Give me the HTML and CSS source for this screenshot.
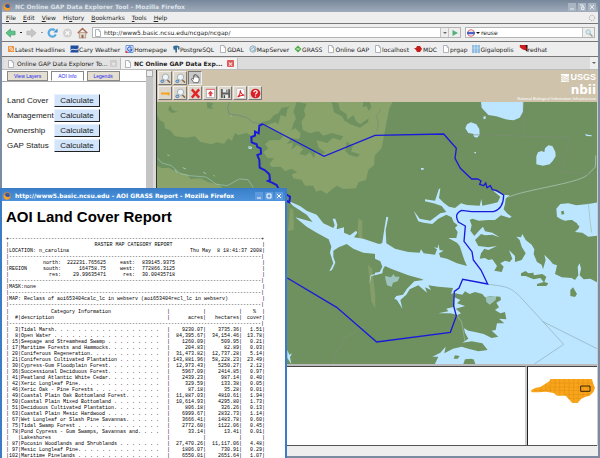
FILE: index.html
```html
<!DOCTYPE html>
<html lang="en">
  <head>
    <meta charset="UTF-8" />
    <meta name="viewport" content="width=device-width, initial-scale=1.0" />
    <title>NC Online GAP Data Explorer Tool</title>
    <link rel="stylesheet" href="styles.css">
  </head>
  <body>
    <!-- Shared icons -->
    <svg class="defs" aria-hidden="true">
      <symbol id="page" viewBox="0 0 8 8">
        <path d="M1.5 .5h3.500l1.500 2v5h-5z" fill="#fff" stroke="#9aa3ac" stroke-width=".8" />
        <path d="M5 .5v2h1.500" fill="none" stroke="#9aa3ac" stroke-width=".6" />
      </symbol>
      <symbol id="fox" viewBox="0 0 8 8">
        <circle cx="4" cy="4" r="3.700" fill="#e8822a" />
        <circle cx="4.400" cy="3.300" r="2.300" fill="#2a5db0" />
        <path d="M.6 3c1 1 2 .6 2.600 1.400s1.800 1 3.800.4c-.6 2-2 2.900-3.400 2.700S.4 5.500.6 3z" fill="#f6a531" />
      </symbol>
      <symbol id="lens" viewBox="0 0 12 12">
        <path d="M7.500 7l3.500 3.500" stroke="#8a6a50" stroke-width="1.600" />
        <circle cx="6" cy="4.500" r="3.400" fill="#eef5fb" stroke="#9fa8b0" />
        <circle cx="2.600" cy="9" r="2" fill="#4f7fb5" />
        <path d="M1.500 9h2.200" stroke="#fff" stroke-width=".8" />
      </symbol>
    </svg>

    <div class="browser">
      <header class="titlebar">
        <svg class="icon"><use href="#fox" /></svg>
        <span class="title">NC Online GAP Data Explorer Tool - Mozilla Firefox</span>
        <button class="win" aria-label="Minimize"><svg viewBox="0 0 8 8"><path d="M2 6h4" /></svg></button>
        <button class="win" aria-label="Restore"><svg viewBox="0 0 8 8"><path d="M2 2h3v2M3.500 4h2.500v2.500h-2.500z" /></svg></button>
        <button class="win" aria-label="Close"><svg viewBox="0 0 8 8"><path d="M2 2l4 4M6 2l-4 4" /></svg></button>
      </header>

      <nav class="menubar">
        <a href="#"><u>F</u>ile</a>
        <a href="#"><u>E</u>dit</a>
        <a href="#"><u>V</u>iew</a>
        <a href="#">Hi<u>s</u>tory</a>
        <a href="#"><u>B</u>ookmarks</a>
        <a href="#"><u>T</u>ools</a>
        <a href="#"><u>H</u>elp</a>
        <svg class="throbber" viewBox="0 0 8 8"><circle cx="4" cy="4" r="2.700" /></svg>
      </nav>

      <div class="navbar">
        <button class="nav" aria-label="Back"><svg viewBox="0 0 12 12"><path d="M1 6l5-4.500v2.500h5v4h-5v2.500z" fill="#5cc389" stroke="#3c9a63" stroke-width=".7" /></svg></button>
        <i class="dot"></i>
        <button class="nav" aria-label="Forward"><svg viewBox="0 0 12 12"><path d="M11 6l-5-4.500v2.500h-5v4h5v2.500z" fill="#c6c6c6" stroke="#b0b0b0" stroke-width=".7" /></svg></button>
        <i class="dot off"></i>
        <button class="nav" aria-label="Reload"><svg viewBox="0 0 12 12"><path d="M9.500 7.500A4 4 0 1 1 8.500 3" fill="none" stroke="#57a9e0" stroke-width="2.400" /><path d="M7 5.500h4.500v-4.500z" fill="#3f92d0" /></svg></button>
        <button class="nav" aria-label="Stop"><svg viewBox="0 0 12 12"><circle cx="6" cy="6" r="5" fill="#d2d2d2" /><path d="M4 4l4 4M8 4l-4 4" stroke="#fff" stroke-width="1.400" /></svg></button>
        <button class="nav" aria-label="Home"><svg viewBox="0 0 12 12"><path d="M2.500 5.500h7v6h-7z" fill="#e2d5c5" stroke="#96715a" stroke-width=".6" /><path d="M.8 6.200l5.200-5.200 5.200 5.200" fill="none" stroke="#ab6d56" stroke-width="1.600" /><path d="M5 8h2v3.500h-2z" fill="#8a6650" /></svg></button>
        <div class="field url">
          <svg class="icon"><use href="#page" /></svg>
          <input type="text" aria-label="Address" value="http://www5.basic.ncsu.edu/ncgap/ncgap/">
          <button class="drop" aria-label="History"><i class="arrow"></i></button>
          <button class="go" aria-label="Go"><svg viewBox="0 0 8 8"><path d="M1.500 1l5.500 3-5.500 3z" fill="#55b077" /></svg></button>
        </div>
        <div class="field search">
          <svg class="icon" viewBox="0 0 8 8"><circle cx="4" cy="4" r="3.300" fill="#fff" stroke="#e0605a" /><path d="M0 2.800h8v2.500h-8z" fill="#4a62c8" /></svg>
          <i class="arrow dark"></i>
          <input type="text" aria-label="Search" value="reuse">
          <button class="go" aria-label="Search"><svg viewBox="0 0 8 8"><path d="M4.500 4.500l3 3" stroke="#999" stroke-width="1.300" /><circle cx="3.200" cy="3" r="2.200" fill="#d7e9f5" stroke="#9bb" stroke-width=".8" /></svg></button>
        </div>
      </div>

      <nav class="bookmarks">
        <a href="#"><svg class="icon" viewBox="0 0 8 8"><path d="M1 1h6v6h-6z" fill="#ef9444" /><path d="M2 3.500a2.500 2.500 0 0 1 2.500 2.500M2 2a4 4 0 0 1 4 4" fill="none" stroke="#fff" stroke-width=".7" /></svg>Latest Headlines</a>
        <a href="#"><svg class="icon wide" viewBox="0 0 8 8"><path d="M0 .5h8v7h-8z" fill="#1f4da0" /><path d="M0 5.500c3-3 5 1 8-2" fill="none" stroke="#fff" /></svg>Cary Weather</a>
        <a href="#"><svg class="icon wide" viewBox="0 0 8 8"><path d="M.5 .5h7v7h-7z" fill="#fff" stroke="#6d94d8" /><path d="M6 2.500a2.200 2.200 0 1 0 0 3v-1.300h-2" fill="none" stroke="#3862c8" stroke-width="1.200" /><path d="M0 6h2v2h-2z" fill="#d44" /></svg>Homepage</a>
        <a href="#"><svg class="icon" viewBox="0 0 8 8"><path d="M1 1.500q3-2 6.500 0v3h-1.500v-2h-1v5h-1.700v-3l-1.500.6z" fill="#386d98" /></svg>PostgreSQL</a>
        <a href="#"><svg class="icon"><use href="#page" /></svg>GDAL</a>
        <a href="#"><svg class="icon" viewBox="0 0 8 8"><circle cx="4" cy="4" r="3.200" fill="#dbe9ee" stroke="#7fa1b0" stroke-width=".8" /><path d="M1.500 5l3-3 2 3-3 1" fill="none" stroke="#6c93a8" stroke-width=".7" /></svg>MapServer</a>
        <a href="#"><svg class="icon" viewBox="0 0 8 8"><path d="M4 .5l3.500 3.500-3.500 3.500-3.500-3.500z" fill="#4da94d" /><path d="M2.500 4h3" stroke="#fff" /></svg>GRASS</a>
        <a href="#"><svg class="icon"><use href="#page" /></svg>Online GAP</a>
        <a href="#"><svg class="icon"><use href="#page" /></svg>localhost</a>
        <a href="#"><svg class="icon wide" viewBox="0 0 9 8"><path d="M0 3l2 0 1-2 3 0 2 3-2 3h-3l-1-2z" fill="#c51d1d" /></svg>MDC</a>
        <a href="#"><svg class="icon"><use href="#page" /></svg>prgap</a>
        <a href="#"><svg class="icon" viewBox="0 0 8 8"><path d="M0 0h8v8h-8z" fill="#90bce0" /><path d="M2.500 0v8M5.500 0v8M0 3h8" stroke="#c4dff0" stroke-width=".7" /></svg>Gigalopolis</a>
        <a href="#"><svg class="icon wide" viewBox="0 0 8 8"><path d="M0 0h8v7z" fill="#111" /><path d="M0 2q1-3 6-2l1.500 4.500q-3 1-5-.5z" fill="#d31c1c" /></svg>redhat</a>
      </nav>

      <div class="tabs">
        <div class="tab">
          <svg class="icon"><use href="#page" /></svg>
          <span>Online GAP Data Explorer To...</span>
          <button class="close" aria-label="Close tab">×</button>
        </div>
        <div class="tab current">
          <svg class="icon"><use href="#page" /></svg>
          <span>NC Online GAP Data Exp...</span>
          <button class="close" aria-label="Close tab">×</button>
        </div>
        <button class="list" aria-label="List tabs"><i class="arrow"></i></button>
      </div>

      <main class="content">
        <section class="side">
          <div class="panel">
            <nav class="panel-tabs">
              <a href="#">View Layers</a>
              <a href="#" class="on">AOI Info</a>
              <a href="#">Legends</a>
            </nav>
            <div class="calc">
              <label for="landcover">Land Cover</label><button id="landcover">Calculate</button>
              <label for="management">Management</label><button id="management">Calculate</button>
              <label for="ownership">Ownership</label><button id="ownership">Calculate</button>
              <label for="gapstatus">GAP Status</label><button id="gapstatus">Calculate</button>
            </div>
          </div>
          <div class="scroll"><i></i></div>
        </section>

        <section class="viewer">
          <div class="maptools">
            <div class="tools">
              <button aria-label="Zoom in"><svg viewBox="0 0 12 12"><use href="#lens" /></svg></button>
              <button aria-label="Zoom out"><svg viewBox="0 0 12 12"><use href="#lens" /></svg></button>
              <button class="pressed" aria-label="Pan"><svg viewBox="0 0 12 12"><path d="M4 10.500l-2.500-4 1-.6 1.300 1v-4h1.200v-1.200h1.200v.8h1.300v1h1.400v1.500h1v3l-1 2.500z" fill="#fff" stroke="#333" stroke-width=".7" /><path d="M5 5v-2M6.500 5v-2M8 5.300v-1.500" stroke="#333" stroke-width=".6" /></svg></button>
            </div>
            <div class="tools">
              <button aria-label="Draw area"><svg viewBox="0 0 12 12"><path d="M1 5h10l-1 3.500-2.500-1.500h-6.500z" fill="#f5a41d" /></svg></button>
              <button aria-label="Zoom to area"><svg viewBox="0 0 12 12"><use href="#lens" /></svg></button>
              <button aria-label="Delete"><svg viewBox="0 0 12 12"><path d="M2 1.500l8 9M10 1.500l-8 9" stroke="#e0252b" stroke-width="2.600" /></svg></button>
              <button aria-label="Upload"><svg viewBox="0 0 12 12"><path d="M1.500 1.500h9v9h-9z" fill="#fff" stroke="#a9b0b8" /><path d="M1 1.500h10" stroke="#e66" /><path d="M6 3l3 3.300h-1.800v2.700h-2.400v-2.700h-1.800z" fill="#e23c44" /></svg></button>
              <button aria-label="Save"><svg viewBox="0 0 12 12"><path d="M1 1h9l1 1v9h-10z" fill="#5d5d5d" /><path d="M3 1h6v4h-6zM3 7h6v4h-6z" fill="#e8e8e8" /><path d="M7 1.500h1v3h-1zM4 8h1.500v3h-1.500z" fill="#444" /></svg></button>
              <button aria-label="PDF"><svg viewBox="0 0 12 12"><path d="M2 .5h6l2.500 2.500v8.500h-8.500z" fill="#fff" stroke="#b8b8b8" stroke-width=".7" /><path d="M3 10c2-2 3-5 2.800-7.500.3 3 2.200 5 4.500 5.500-3-.4-5 .3-7.300 2z" fill="none" stroke="#d8232a" stroke-width="1.100" /></svg></button>
              <button aria-label="Help"><svg viewBox="0 0 12 12"><circle cx="6" cy="6" r="5.300" fill="#d81f26" /><path d="M4.200 4.700c0-2.500 3.700-2.300 3.600-.1 0 1.200-1.700 1.200-1.700 2.600M6 8.200v1.400" fill="none" stroke="#fff" stroke-width="1.300" /></svg></button>
            </div>
            <div class="logos">
              <div class="usgs"><svg viewBox="0 0 8 8"><path d="M0 0h8v8h-8z" fill="#fff" /><path d="M0 2.500c3-2 4 2.500 8 0M0 4.500c3-2 4 2.500 8 0M0 6.500c3-2 4 1.500 8 0" fill="none" stroke="#cfc3ab" stroke-width=".8" /></svg>USGS</div>
              <div class="nbii">nbii</div>
              <div class="tagline">National Biological Information Infrastructure</div>
            </div>
          </div>

          <svg class="map" viewBox="0 0 1320 786" preserveAspectRatio="xMinYMin slice" role="img" aria-label="Map of the area of interest">
            <!-- land -->
            <path d="M0 0h1340v800h-1340z" fill="#6f915f" />
            <g fill="#89a36b" transform="translate(-21 -111)">
              <path d="M21 111H434L420 125 395 128 385 145 372 150 360 165 335 172 328 200 306 214 290 204 265 210 255 204 245 228 235 220 222 236 200 232 185 238 150 230 135 214 110 218 75 214 60 196 45 190 42 172 28 165 21 150z" />
              <path d="M434 111H728L718 130 708 180 695 250 675 270 672 300 655 315 648 345 625 352 618 370 580 372 560 362 530 386 512 376 498 380 490 362 465 362 455 345 430 340 425 328 442 322 425 312 405 318 392 305 365 306 358 296 372 280 352 278 340 262 355 250 345 238 358 226 390 225 400 212 345 182 375 172 385 178 392 150 408 155 412 132z" />
              <path d="M21 302l15 8 20-2 25 14 30 6 10 14 30-2 25 12 30 6 24 22H21z" />
              <path d="M420 428l10 6 2 60-18 4zM625 460l12 8 0 50-10 8-4-30zM654 600l12 10 10 80 0 40-12-20z" opacity=".75" />
            </g>
            <g fill="#6f915f" transform="translate(-21 -111)">
              <path d="M440 111L470 116 462 135 466 152 454 170 458 195 480 205 505 198 520 212 545 204 580 214 572 226 548 218 532 234 500 226 506 248 526 262 512 270 498 258 492 280 480 262 466 272 448 266 460 252 442 240 424 254 430 232 410 238 424 220 448 222 452 205 436 190 424 196 430 176 438 160 430 140z" />
              <path d="M545 111L565 114 570 134 590 148 594 172 584 168 576 154 552 142zM610 150L618 168 630 178 656 160 654 172 630 188 598 176 588 168zM590 230L608 242 604 260 630 268 622 276 598 270 586 258zM640 111H660L664 128 656 138 650 124 638 126z" />
              <path d="M170 111L190 115 184 126 192 132 172 130zM60 120L68 136 84 140 66 144 54 134z" />
            </g>

            <!-- lakes in the north -->
            <g fill="#bce6ff" transform="translate(654 -111)">
              <path d="M318 111H446L444 140 434 158 416 166 392 163 364 154 340 150 320 128z" />
              <path d="M271 190L276 178 288 172 304 178 313 192 314 210 306 218 297 215 294 206 280 204z" />
              <path d="M484 298V274L489 262 500 258 508 262 510 250 520 241 532 243 541 260 542 274 533 288 524 298 504 302z" />
              <path d="M325 155l7-2 0 8-6 2zM138 309h8v5h-8zM630 206l8 3 12 2 0 3-16-1zM298 261h5v4h-5z" />
            </g>
            <path d="M1054 285C1110 262 1260 244 1290 220L1315 195 1316 160" fill="none" stroke="#9bbba5" stroke-width="3" />

            <!-- sound and its rivers -->
            <g transform="translate(654 294)">
              <path fill="#bce6ff" d="M0 130L16 132 22 128 26 100 34 50 40 52 32 90 34 130 60 146 84 152 100 156 134 158 138 148 146 160 180 164 186 148 176 142 188 144 190 132 194 150 206 152 192 160 196 172 216 176 246 190 276 198 268 180 258 150 254 138 246 128 220 114 244 114 248 96 240 84 248 76 236 66 230 52 214 44 190 56 172 72 146 68 130 64 116 32 134 56 166 62 196 40 214 36 200 18 176 10 150 4 150 -2 180 2 192 -34 196 -34 192 -6 206 8 222 20 240 24 258 10 276 15 314 17 319 -3 322 17 350 11 368 7 376 -10 352 -30 384 -16 404 -14 392 -4 390 12 386 28 396 40 410 50 404 54 378 46 360 60 340 60 312 62 292 56 284 60 290 76 286 92 298 108 314 90 324 80 330 94 352 98 374 112 352 104 330 106 318 102 300 120 310 138 340 142 366 138 340 150 328 146 318 160 314 176 330 174 340 180 352 178 366 198 358 212 380 216 386 200 376 190 390 182 404 186 412 176 402 150 420 168 420 186 440 180 452 160 440 140 434 120 424 110 438 112 442 102 452 120 470 134 478 148 476 162 486 186 500 194 504 208 512 180 508 164 524 180 534 192 546 196 540 222 560 232 590 234 600 240 610 226 608 200 614 190 618 206 614 226 626 238 646 236 668 248 690 246V500H300L290 476 270 478 262 500H176L190 470 172 470 196 458 212 440 208 460 234 446 260 440 280 446 310 454 338 450 322 430 290 424 262 428 280 416 270 398 266 380 246 344 226 340 190 340 220 334 214 326 238 320 236 278 228 282 234 264 190 260 160 256 168 270 150 262 156 278 130 256 104 268 94 284 76 300 82 326 66 300 58 296 64 288 84 284 96 266 118 244 146 240 138 236 100 226 74 216 48 206 30 198 24 208 22 220 0 226V218L14 216 22 200 16 184 0 176z" />
              <g fill="#6f915f">
                <path d="M240 280L262 284 270 274 284 282 300 276 322 282 330 292 346 288 376 290 378 300 364 308 372 322 360 330 376 340 390 336 394 358 372 356 388 370 366 370 362 390 350 392 370 410 350 414 326 402 300 396 280 392 266 384 246 346 258 340 242 326 270 318 246 310 256 300 238 292z" />
                <path d="M438 220L452 213 460 220 476 218V226L502 222 514 230 508 246 520 250 514 258H486V252L506 246 496 234 476 238 452 228 438 228zM586 270L594 262 606 282 600 291 586 288z" />
                <path d="M240 466l14 2-6 8-12 0zM268 500L276 478H296L304 500z" />
              </g>
              <path fill="#bce6ff" d="M546 50L544 26 556 12 580 10 604 16 640 12 690 4V104L640 110 622 98 600 96 612 84 606 70 590 60 570 62 558 58z" />
              <path fill="#6f915f" d="M566 76L576 62 592 60 600 72 614 78 610 84 592 82 582 92 574 78zM558 34l8-2 2 10-8 2z" />
              <path fill="#bce6ff" d="M30 228l18 4 8-10 4 8 14 0-6 14-14 4-4 12-14-4-4-16zM332 290l32-2-2 12-18 14-10-8z" opacity=".6" />
              <path d="M640 10l6 60 4 28M246 346l14 20 10 60" fill="none" stroke="#9bbba5" stroke-width="2" />
            </g>

            <!-- river running west -->
            <g transform="translate(-21 294)">
              <path fill="#bce6ff" d="M414 2L450 18 470 32 500 44 520 70 550 84 554 76 548 56 556 56 562 74 560 88 582 82 582 98 600 106 618 92 622 98 612 112 640 116 680 130V162L640 158 610 146 590 132 566 142 550 152 550 170 556 188 546 210 538 214 550 190 540 158 544 140 536 118 500 98 470 80 436 52 466 60 488 66 470 44 430 18z" />
              <path fill="#bce6ff" d="M674 222l-12 4-4 28 6-26 10-2zM412 450l6 14 8-4-6 12 4 20-8-12-4-6z" />
              <path d="M550 492l4-32 20-22 8-24 30-14 12-16 20-2" fill="none" stroke="#7f8f78" stroke-width="2" />
            </g>
            <g fill="none" transform="translate(-21 -111)" stroke="#9bc4b8" stroke-width="3">
              <path d="M21 278L36 294 64 302 92 326 118 332 168 336 200 358 232 362 268 342 294 344 310 368" stroke-width="2" />
              <path d="M52 270l6 2M98 308l10 4M74 314l8 10M242 153h4" />
              <path d="M294 246h10v4h-8" stroke="#bce6ff" />
              <path d="M160 322l8 4M190 330l4 4" />
            </g>

            <!-- county lines -->
            <g fill="none" stroke="#7d8b7a" stroke-width="3">
              <path d="M218 0L212 16 216 36 246 40 272 48 288 62 317 66" />
              <path d="M864 96L1238 106 1214 210 1294 218M1099 0V102M660 90l4-30-6-16 14-24" stroke-width="2" />
              <path d="M992 547C1052 553 1062 557 1092 587L1220 727 1132 786M1156 658L1320 740" stroke="#8fa9b5" stroke-width="2" />
            </g>

            <!-- area of interest -->
            <g class="aoi">
              <path d="M391 528L539 616 659 720 880 691 898 642 890 612 892 568 906 558 917 532 992 546 972 504 949 474 945 449 921 418 925 372 904 360Q890 335 914 325L944 329H1009Q1040 320 1040 279L1018 265 1006 263 1000 251 990 257 986 243 980 251 968 247 972 237 962 231 944 231 910 199 894 169 898 139 860 96 654 100 501 163 317 66" />
              <path d="M317 66L307 71 305 94 294 89V101L283 105 284 121 299 127 301 135 311 139 312 155 301 159 307 174 308 197 324 205 337 217 339 234 333 237 345 242 359 249 364 259 391 279 399 284 397 301 389 297" stroke-width="6" />
            </g>
          </svg>

          <div class="bottom">
            <div class="blank"></div>
            <div class="overview">
              <svg viewBox="0 0 192 72" role="img" aria-label="North Carolina">
                <path d="M0 34L14 26 28 24 56 6 58 0H183L186 12 192 26 188 38 176 50 162 54 150 60 140 72H124L104 50H78L68 42 44 38 24 40H2z" fill="#f9a51c" />
                <path d="M30 24v15M44 16v22M58 2v37M72 1v40M86 1v48M100 1v48M114 1v56M128 1v70M142 1v60M156 1v54M170 1v48M58 12h126M48 24h140M10 34h176M100 46h75M112 58h38" fill="none" stroke="#c87c0a" stroke-width="1" stroke-dasharray="9 2" />
                <path d="M149 21h28v16h-28z" fill="none" stroke="#3d2400" stroke-width="3" />
              </svg>
            </div>
          </div>
        </section>
      </main>

      <footer class="status"></footer>
    </div>

    <!-- Report window lying over the browser -->
    <div class="popup">
      <header class="titlebar">
        <svg class="icon"><use href="#fox" /></svg>
        <span class="title">http://www5.basic.ncsu.edu - AOI GRASS Report - Mozilla Firefox</span>
        <button class="win" aria-label="Minimize"><svg viewBox="0 0 8 8"><path d="M2 6h4" /></svg></button>
        <button class="win" aria-label="Maximize"><svg viewBox="0 0 8 8"><path d="M2 2h4v4h-4z" /></svg></button>
        <button class="win" aria-label="Close"><svg viewBox="0 0 8 8"><path d="M2 2l4 4M6 2l-4 4" /></svg></button>
      </header>
      <h1>AOI Land Cover Report</h1>
      <div class="report">
        <div class="line">+------------------------------------------------------------------------------------+</div>
        <div class="line"><b>|</b><span class="center">RASTER MAP CATEGORY REPORT</span><b>|</b></div>
        <div class="line"><b>|</b><span>LOCATION: n_carolina</span><span class="end">Thu May  8 18:41:37 2008</span><b>|</b></div>
        <div class="line">|------------------------------------------------------------------------------------|</div>
        <div class="line region"><b>|</b><span></span><span>north:</span><span>222231.765625</span><span>east:</span><span>839145.9375</span><b>|</b></div>
        <div class="line region"><b>|</b><span>REGION</span><span>south:</span><span>164758.75</span><span>west:</span><span>772866.3125</span><b>|</b></div>
        <div class="line region"><b>|</b><span></span><span>res:</span><span>29.99635471</span><span>res:</span><span>30.00435718</span><b>|</b></div>
        <div class="line">|------------------------------------------------------------------------------------|</div>
        <div class="line"><b>|</b><span>MASK:none</span><b class="end">|</b></div>
        <div class="line">|------------------------------------------------------------------------------------|</div>
        <div class="line"><b>|</b><span>MAP: Reclass of aoi653404calc_lc in webserv (aoi653404recl_lc in webserv)</span><b class="end">|</b></div>
        <div class="line">|------------------------------------------------------------------------------------|</div>
        <table>
          <colgroup><col class="c-id"><col><col class="c-bar"><col class="c-num"><col class="c-num"><col class="c-cover"></colgroup>
          <thead>
            <tr><th>|</th><th class="mid">Category Information</th><th>|</th><th>|</th><th>|</th><th>%  |</th></tr>
            <tr><th>|  #|</th><th>description</th><th>|</th><th>acres|</th><th>hectares|</th><th>cover|</th></tr>
            <tr><td colspan="6">|------------------------------------------------------------------------------------|</td></tr>
          </thead>
          <tbody>
            <tr><td>|  3|</td><td>Tidal Marsh. . . . . . . . . . . . . . . . . .</td><td>|</td><td>9230.07|</td><td>3735.36|</td><td>1.51|</td></tr>
            <tr><td>|  8|</td><td>Open Water . . . . . . . . . . . . . . . . . .</td><td>|</td><td>84,395.67|</td><td>34,154.46|</td><td>13.78|</td></tr>
            <tr><td>| 15|</td><td>Seepage and Streamhead Swamp . . . . . . . . .</td><td>|</td><td>1260.09|</td><td>509.95|</td><td>0.21|</td></tr>
            <tr><td>| 17|</td><td>Maritime Forests and Hammocks. . . . . . . . .</td><td>|</td><td>204.83|</td><td>82.89|</td><td>0.03|</td></tr>
            <tr><td>| 20|</td><td>Coniferous Regeneration. . . . . . . . . . . .</td><td>|</td><td>31,473.82|</td><td>12,737.28|</td><td>5.14|</td></tr>
            <tr><td>| 21|</td><td>Coniferous Cultivated Plantation . . . . . . .</td><td>|</td><td>143,881.96|</td><td>58,228.23|</td><td>23.49|</td></tr>
            <tr><td>| 30|</td><td>Cypress-Gum Floodplain Forest. . . . . . . . .</td><td>|</td><td>12,973.43|</td><td>5250.27|</td><td>2.12|</td></tr>
            <tr><td>| 36|</td><td>Successional Deciduous Forest. . . . . . . . .</td><td>|</td><td>5967.09|</td><td>2414.85|</td><td>0.97|</td></tr>
            <tr><td>| 41|</td><td>Peatland Atlantic White Cedar. . . . . . . . .</td><td>|</td><td>2439.23|</td><td>987.14|</td><td>0.40|</td></tr>
            <tr><td>| 42|</td><td>Xeric Longleaf Pine. . . . . . . . . . . . . .</td><td>|</td><td>329.59|</td><td>133.38|</td><td>0.05|</td></tr>
            <tr><td>| 46|</td><td>Xeric Oak - Pine Forests . . . . . . . . . . .</td><td>|</td><td>87.18|</td><td>35.28|</td><td>0.01|</td></tr>
            <tr><td>| 49|</td><td>Coastal Plain Oak Bottomland Forest. . . . . .</td><td>|</td><td>11,887.03|</td><td>4810.61|</td><td>1.94|</td></tr>
            <tr><td>| 50|</td><td>Coastal Plain Mixed Bottomland . . . . . . . .</td><td>|</td><td>10,614.93|</td><td>4295.80|</td><td>1.73|</td></tr>
            <tr><td>| 51|</td><td>Deciduous Cultivated Plantation. . . . . . . .</td><td>|</td><td>806.18|</td><td>326.26|</td><td>0.13|</td></tr>
            <tr><td>| 63|</td><td>Coastal Plain Mesic Hardwood . . . . . . . . .</td><td>|</td><td>6999.67|</td><td>2832.73|</td><td>1.14|</td></tr>
            <tr><td>| 67|</td><td>Wet Longleaf or Slash Pine Savannas. . . . . .</td><td>|</td><td>3666.41|</td><td>1483.78|</td><td>0.60|</td></tr>
            <tr><td>| 75|</td><td>Tidal Swamp Forest . . . . . . . . . . . . . .</td><td>|</td><td>2772.60|</td><td>1122.06|</td><td>0.45|</td></tr>
            <tr><td>| 78|</td><td>Pond Cypress - Gum Swamps, Savannas and. . . .</td><td>|</td><td>33.14|</td><td>13.41|</td><td>0.01|</td></tr>
            <tr><td>|   |</td><td>Lakeshores</td><td>|</td><td>|</td><td>|</td><td>|</td></tr>
            <tr><td>| 87|</td><td>Pocosin Woodlands and Shrublands . . . . . . .</td><td>|</td><td>27,470.26|</td><td>11,117.06|</td><td>4.48|</td></tr>
            <tr><td>| 97|</td><td>Mesic Longleaf Pine. . . . . . . . . . . . . .</td><td>|</td><td>1806.07|</td><td>730.91|</td><td>0.29|</td></tr>
            <tr><td>|102|</td><td>Maritime Pinelands . . . . . . . . . . . . . .</td><td>|</td><td>6550.01|</td><td>2651.64|</td><td>1.07|</td></tr>
          </tbody>
        </table>
      </div>
    </div>
  </body>
</html>
```
FILE: styles.css
```css
* {
  box-sizing: border-box;
  margin: 0;
  padding: 0;
}
body {
  position: relative;
  height: 100vh;
  overflow: hidden;
  font-family: "DejaVu Sans", sans-serif;
  font-size: 6px;
  color: #222;
}
a {
  color: inherit;
  text-decoration: none;
}
button {
  display: flex;
  align-items: center;
  justify-content: center;
  border: none;
  background: none;
  font: inherit;
  color: inherit;
}
input {
  flex: 1;
  min-width: 0;
  border: none;
  outline: none;
  background: none;
  font: inherit;
  color: inherit;
}
svg {
  display: block;
}
.defs {
  position: absolute;
  width: 0;
  height: 0;
}
.icon {
  flex: none;
  width: 8px;
  height: 8px;
}
.icon.wide {
  width: 9px;
}
.arrow {
  border: 2px solid transparent;
  border-top-color: #666;
  border-bottom: none;
}
.arrow.dark {
  border-top-color: #111;
  margin: 0 1px;
}

/* Main window */
.browser {
  display: flex;
  flex-direction: column;
  height: 100%;
  padding: 0 2px 2px;
  background: #7c8ba1;
}
.titlebar {
  display: flex;
  align-items: center;
  flex: none;
  height: 12px;
  padding: 1px 0 0 1px;
  background: linear-gradient(#77879a, #9fabbb);
  color: #dde2e8;
  font-weight: bold;
}
.title {
  flex: 1;
  padding-left: 4px;
  white-space: nowrap;
}
.win {
  width: 8px;
  height: 8px;
  margin-right: 2px;
  background: #a9b5c2;
}
.win svg {
  width: 8px;
  height: 8px;
  fill: none;
  stroke: #e8ecf0;
}
.menubar {
  display: flex;
  align-items: center;
  flex: none;
  gap: 7px;
  height: 12px;
  padding: 0 2px 0 4px;
  background: #eee;
  border-bottom: 1px solid #777;
}
.throbber {
  width: 8px;
  height: 8px;
  margin-left: auto;
  fill: none;
  stroke: #999;
  stroke-width: 1;
  stroke-dasharray: 1 1;
}
.navbar {
  display: flex;
  align-items: center;
  flex: none;
  gap: 4px;
  height: 18px;
  padding: 0 3px;
  background: #eee;
  border-bottom: 1px solid #777;
}
.nav {
  width: 11px;
  height: 12px;
}
.nav svg {
  width: 12px;
  height: 12px;
}
.dot {
  width: 2px;
  height: 1px;
  background: #222;
}
.dot.off {
  background: #999;
}
.field {
  display: flex;
  align-items: center;
  height: 11px;
  padding-left: 1px;
  background: #fff;
  border: 1px solid #b4b4b4;
}
.url {
  flex: 1;
}
.url input {
  padding-left: 2px;
}
.search {
  width: 130px;
}
.drop,
.go {
  align-self: stretch;
  width: 8px;
  background: #eee;
  border-left: 1px solid #c4c4c4;
}
.go {
  width: 12px;
}
.go svg {
  width: 8px;
  height: 8px;
}
.bookmarks {
  display: flex;
  align-items: center;
  flex: none;
  gap: 5px;
  height: 15px;
  padding-left: 5px;
  background: #eee;
  border-bottom: 1px solid #777;
  white-space: nowrap;
}
.bookmarks a {
  display: flex;
  align-items: center;
}
.tabs {
  display: flex;
  align-items: flex-end;
  flex: none;
  height: 13px;
  padding-left: 2px;
  background: #dcdcdc;
  border-bottom: 1px solid #bbb;
}
.tab {
  display: flex;
  align-items: center;
  width: 117px;
  height: 11px;
  padding: 0 3px;
  background: #e2e2e2;
  border-right: 1px solid #bbb;
  white-space: nowrap;
}
.tab span {
  flex: 1;
  padding-left: 2px;
}
.tab.current {
  background: #f3f3f3;
  font-weight: bold;
}
.close {
  width: 7px;
  height: 7px;
  background: #ccc;
  border-radius: 1px;
  color: #fff;
}
.current .close {
  background: #dd5a5a;
}
.list {
  width: 8px;
  height: 12px;
  margin-left: auto;
  background: #eee;
}

/* Page */
.content {
  display: flex;
  flex: 1;
  min-height: 0;
}
.side {
  display: flex;
  flex: none;
  width: 155px;
  padding-right: 3px;
  background: #d8d8d8;
  border-right: 1px solid #333;
}
.panel {
  flex: 1;
  background: #fff;
  font-family: "Liberation Sans", Arial, sans-serif;
}
.panel-tabs {
  display: flex;
  align-items: flex-end;
  gap: 3px;
  height: 12px;
  padding-left: 5px;
  border-bottom: 1px solid #aaa;
  font-size: 5px;
  color: #2222ee;
}
.panel-tabs a {
  height: 10px;
  padding: 0 6px;
  background: #e4dfd0;
  border: 1px solid #888;
  line-height: 8px;
}
.panel-tabs .on {
  background: #fff;
  border-bottom-color: #fff;
}
.calc {
  display: grid;
  grid-template-columns: 47px 46px;
  gap: 2px 0;
  align-items: center;
  padding: 12px 0 0 5px;
  font-size: 8px;
}
.calc button {
  height: 13px;
  background: #d3e5fa;
  border: 1px solid #e8f2ff;
  border-right-color: #222;
  border-bottom-color: #222;
}
.scroll {
  width: 7px;
  background: #c4c4c4;
}
.scroll i {
  display: block;
  height: 7px;
  background: #eee;
  border: 1px solid #aaa;
}
.viewer {
  display: flex;
  flex: 1;
  flex-direction: column;
  min-width: 0;
  background: #fff;
  border-right: 1px solid #ccc;
}
.maptools {
  display: grid;
  grid-template-columns: auto auto;
  grid-template-rows: 15px 15px;
  justify-content: space-between;
  flex: none;
  height: 32px;
  padding: 1px;
  background: #cfc3ab;
}
.tools {
  display: flex;
  gap: 1px;
}
.tools button {
  width: 14px;
  height: 14px;
  background: #ddd6ca;
  border: 1px solid #eee;
  border-right-color: #777;
  border-bottom-color: #777;
}
.tools .pressed {
  background: #c8c8c8;
  border-color: #777 #eee #eee #777;
}
.tools svg {
  width: 11px;
  height: 11px;
}
.logos {
  grid-area: 1 / 2 / 3 / 3;
  padding-top: 1px;
  color: #fff;
  font-family: "Liberation Sans", Arial, sans-serif;
  text-align: right;
}
.usgs {
  display: flex;
  align-items: center;
  justify-content: flex-end;
  gap: 1px;
  font-size: 9px;
  font-weight: bold;
  line-height: 11px;
}
.usgs svg {
  width: 8px;
  height: 8px;
}
.nbii {
  font-family: "DejaVu Sans", sans-serif;
  font-size: 12px;
  font-weight: bold;
  line-height: 14px;
}
.tagline {
  font-size: 4px;
  line-height: 4px;
}
.map {
  flex: 1;
  width: 100%;
  min-height: 0;
}
.aoi {
  fill: none;
  stroke: #1a1adb;
  stroke-width: 4;
}
.bottom {
  display: flex;
  flex: none;
  height: 82px;
  border-top: 2px solid #bbb;
  border-bottom: 1px solid #555;
}
.blank {
  flex: 1;
  border-top: 1px solid #444;
  border-right: 2px solid #ccc;
}
.overview {
  width: 70px;
  padding: 12px 2px 0 3px;
  border-top: 1px solid #444;
  border-left: 1px solid #222;
}
.overview svg {
  width: 100%;
}
.status {
  flex: none;
  height: 10px;
  background: #eee;
}

/* Report window */
.popup {
  position: absolute;
  top: 188px;
  bottom: 0;
  left: 0;
  width: 287px;
  overflow: hidden;
  background: #fff;
  border: 2px solid #3c7cc6;
  border-top-width: 1px;
  border-bottom: none;
}
.popup .titlebar {
  background: linear-gradient(#3b7fc9, #4b93dc);
  color: #fff;
}
.popup .win {
  background: #5d9ade;
}
.popup .win svg {
  stroke: #fff;
}
h1 {
  margin: 7px 0 0 4px;
  color: #000;
  font-family: "Liberation Sans", Arial, sans-serif;
  font-size: 15px;
  line-height: 18px;
}
.report {
  width: 259px;
  margin: 10px 0 0 4px;
  color: #000;
  font-family: "Liberation Mono", monospace;
  font-size: 5px;
  line-height: 6px;
}
.report b {
  font-weight: normal;
}
.line {
  display: flex;
  white-space: pre;
}
.center {
  flex: 1;
  padding-right: 4px;
  text-align: center;
}
.end {
  margin-left: auto;
}
.region {
  display: grid;
  grid-template-columns: 3px 32px 20px 45px 29px 40px 1fr;
}
.region span:nth-child(3),
.region span:nth-child(4),
.region span:nth-child(5),
.region span:nth-child(6),
.region b:last-child {
  text-align: right;
}
table {
  width: 100%;
  margin-top: 1px;
  border-collapse: collapse;
  table-layout: fixed;
}
.c-id {
  width: 15px;
}
.c-bar {
  width: 3px;
}
.c-num {
  width: 36px;
}
.c-cover {
  width: 23px;
}
th {
  font-weight: normal;
}
th,
td {
  text-align: right;
  white-space: pre;
}
th:first-child,
td:first-child,
th:nth-child(2),
td:nth-child(2) {
  text-align: left;
}
th.mid {
  padding-left: 30px;
}
```
